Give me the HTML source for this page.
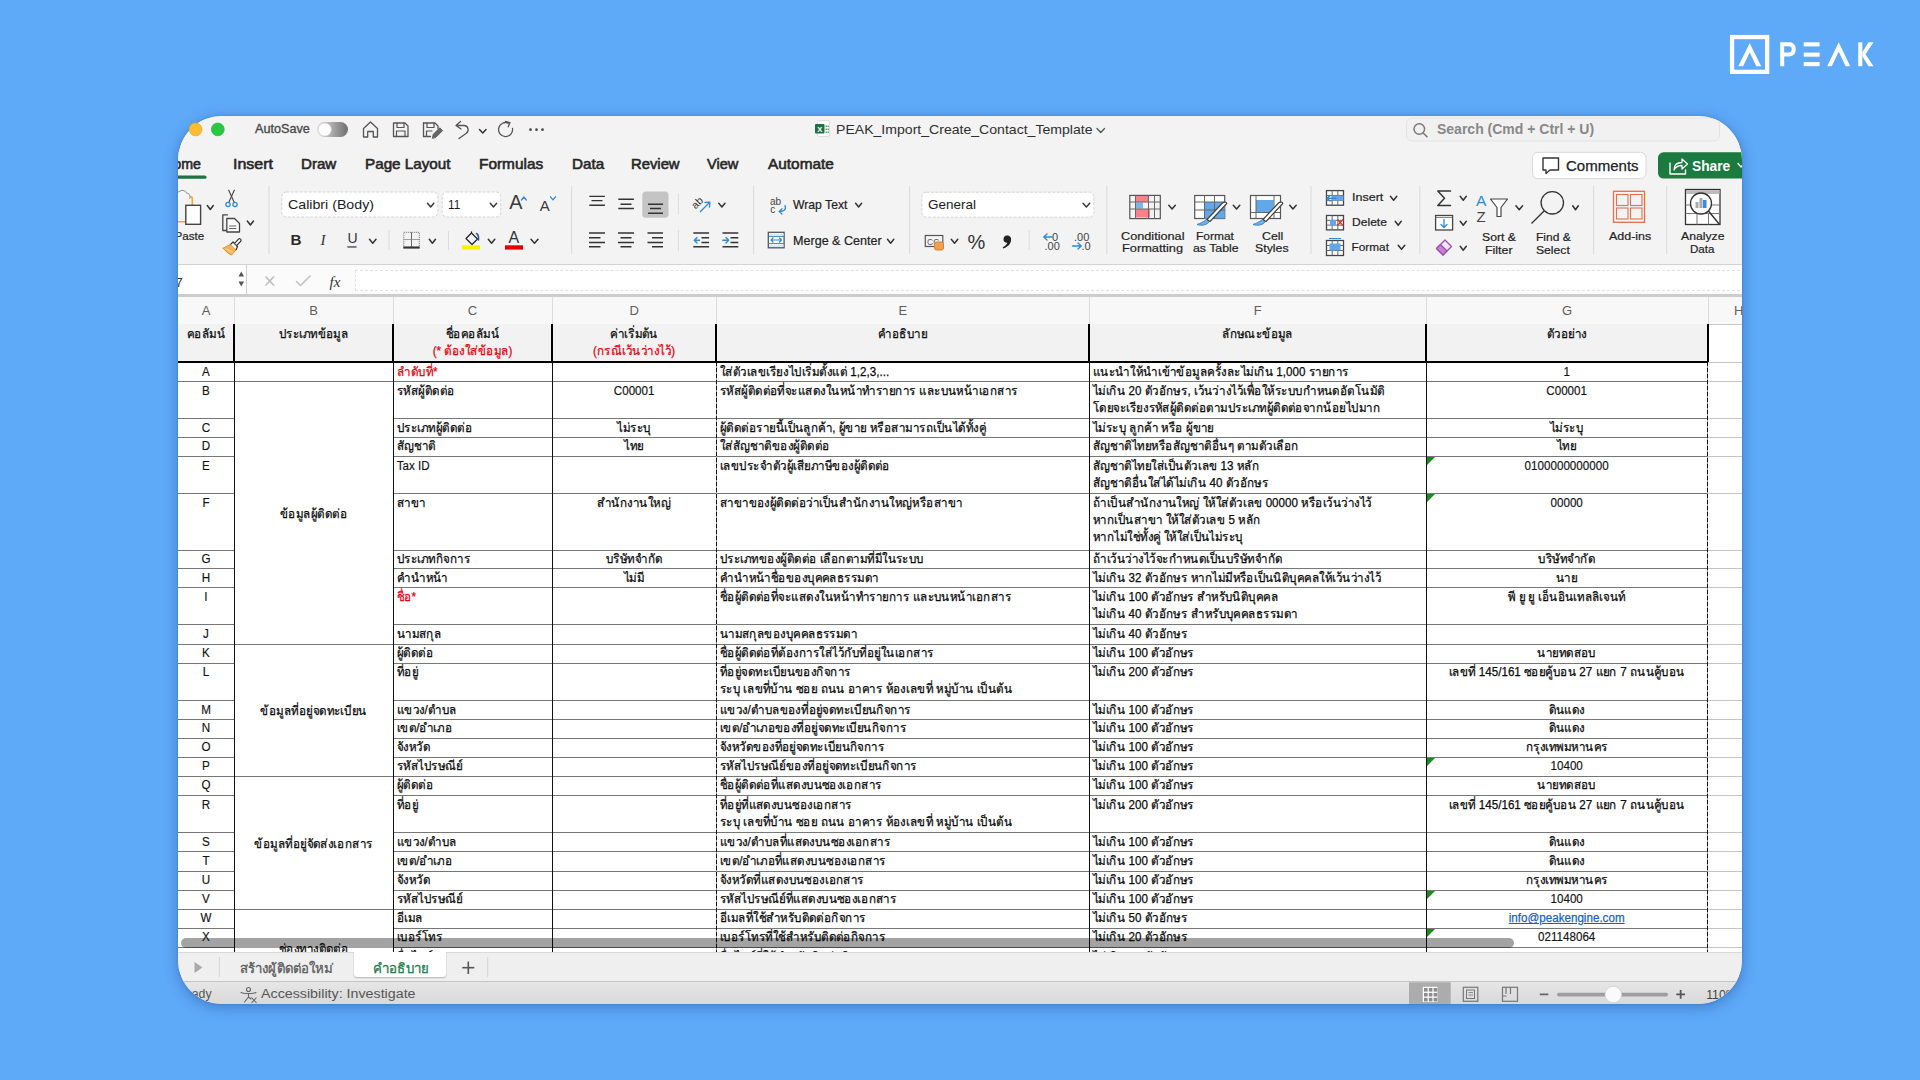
<!DOCTYPE html><html><head><meta charset="utf-8"><style>
*{margin:0;padding:0;box-sizing:border-box}
html,body{width:1920px;height:1080px;overflow:hidden}
body{background:#5ea9f8;font-family:"Liberation Sans", sans-serif;position:relative}
.abs{position:absolute}
#win{position:absolute;left:178px;top:116px;width:1564px;height:888px;border-radius:44px;overflow:hidden;background:#f3f3f3;box-shadow:0 3px 14px rgba(15,55,120,.38),0 0 2px rgba(15,55,120,.25)}
#inner{position:absolute;left:-178px;top:-116px;width:1920px;height:1080px}
.colh{text-align:center;font-size:13px;color:#5e5e5e;line-height:16px}
.cell{font-size:12.5px;line-height:17px;color:#0a0a0a;padding:1.2px 4px 0;white-space:nowrap;transform:scaleX(0.93);transform-origin:0 0;-webkit-text-stroke-width:0.25px}
.cell.lat{-webkit-text-stroke-width:0.15px;color:#111}
.cell.c{text-align:center;transform-origin:50% 0}
.red{color:#e8000b}
.lnk{color:#1b5fc6;text-decoration:underline}
.hl{height:1px;background:#777}
.hl2{height:1px;background:#c6c6c6}
.vl{background:#111}
.vd{background:repeating-linear-gradient(180deg,#111 0 4px,#999 4px 6px)}
.tri{width:0;height:0;border-top:8px solid #1a8a1a;border-right:8px solid transparent}
.t{white-space:nowrap}
</style></head><body>
<svg class="abs" style="left:0;top:0;z-index:5" width="1920" height="140" viewBox="0 0 1920 140">
<circle cx="195.6" cy="129.4" r="6.4" fill="#febc2e" stroke="#e6a62a" stroke-width="0.7"/>
<circle cx="217.8" cy="129.4" r="6.4" fill="#28c840" stroke="#22b43a" stroke-width="0.7"/>
<rect x="1732.05" y="37.05" width="35.1" height="34.8" fill="none" stroke="#fff" stroke-width="4.3"/>
<polygon points="1738.2,66.2 1749.7,43.2 1761.2,66.2 1756.3,66.2 1749.7,52.6 1743.1,66.2" fill="#fff"/>
<path d="M1780.2,66.2 L1780.2,42.3 L1789,42.3 C1793.5,42.3 1795.7,45 1795.7,49.3 C1795.7,53.6 1793.5,56.4 1789,56.4 L1784.2,56.4 L1784.2,66.2 Z M1784.2,46.2 L1784.2,52.5 L1788.7,52.5 C1790.8,52.5 1791.7,51.3 1791.7,49.35 C1791.7,47.4 1790.8,46.2 1788.7,46.2 Z" fill="#fff" fill-rule="evenodd"/>
<rect x="1803.7" y="42.3" width="15.9" height="4.1" fill="#fff"/>
<rect x="1803.7" y="52.6" width="15.9" height="4.1" fill="#fff"/>
<rect x="1803.7" y="62.1" width="15.9" height="4.1" fill="#fff"/>
<polygon points="1827.2,66.2 1838.7,42.3 1850.2,66.2 1845.6,66.2 1838.7,51.5 1831.8,66.2" fill="#fff"/>
<rect x="1858.2" y="42.3" width="4.1" height="23.9" fill="#fff"/>
<polygon points="1862.3,52.3 1868.5,42.3 1873.5,42.3 1865.5,54.3 1873.5,66.2 1868.5,66.2 1862.3,56.3" fill="#fff"/>
</svg>
<div id="win"><div id="inner">

<div class="abs" style="left:178px;top:116px;width:1564px;height:149px;background:#f3f3f3"></div>
<div class="abs" style="left:178px;top:264px;width:1564px;height:1px;background:#d2d2d2"></div>
<div class="abs" style="left:178px;top:265px;width:1564px;height:29.5px;background:#fbfbfb"></div>
<div class="abs" style="left:178px;top:265px;width:68px;height:29.5px;background:#fff"></div>
<div class="abs" style="left:246px;top:265px;width:1px;height:29.5px;background:#d0d0d0"></div>
<div class="abs" style="left:354.5px;top:270px;width:1400px;height:21px;background:#fff;border:1px dashed #e2e2e2;border-right:none"></div>
<div class="abs" style="left:178px;top:294px;width:1564px;height:2.5px;background:#cdcdcd"></div>
<div class="abs" style="left:178px;top:324px;width:1564px;height:628px;background:#fff"></div>

<div class="abs" style="left:0;top:0;width:1920px;height:952px;overflow:hidden"><div class="abs" style="left:178px;top:296.5px;width:1570px;height:27.7px;background:#f8f8f8"></div><div class="abs" style="left:178px;top:323.7px;width:1570px;height:1px;background:#c8c8c8"></div><div class="abs colh" style="left:178px;top:302.5px;width:56px">A</div><div class="abs colh" style="left:234px;top:302.5px;width:159px">B</div><div class="abs" style="left:234px;top:296.5px;width:1px;height:27.7px;background:#dcdcdc"></div><div class="abs colh" style="left:393px;top:302.5px;width:159px">C</div><div class="abs" style="left:393px;top:296.5px;width:1px;height:27.7px;background:#dcdcdc"></div><div class="abs colh" style="left:552px;top:302.5px;width:164.3px">D</div><div class="abs" style="left:552px;top:296.5px;width:1px;height:27.7px;background:#dcdcdc"></div><div class="abs colh" style="left:716.3px;top:302.5px;width:373px">E</div><div class="abs" style="left:716.3px;top:296.5px;width:1px;height:27.7px;background:#dcdcdc"></div><div class="abs colh" style="left:1089.3px;top:302.5px;width:337px">F</div><div class="abs" style="left:1089.3px;top:296.5px;width:1px;height:27.7px;background:#dcdcdc"></div><div class="abs colh" style="left:1426.3px;top:302.5px;width:281.3px">G</div><div class="abs" style="left:1426.3px;top:296.5px;width:1px;height:27.7px;background:#dcdcdc"></div><div class="abs colh" style="left:1707.6px;top:302.5px;width:62.4px">H</div><div class="abs" style="left:1707.6px;top:296.5px;width:1px;height:27.7px;background:#dcdcdc"></div><div class="abs" style="left:178px;top:324.2px;width:1529.6px;height:36.8px;background:#f2f2f2"></div><div class="abs cell c" style="left:178px;top:325.2px;width:56px">คอลัมน์</div><div class="abs cell c" style="left:234px;top:325.2px;width:159px">ประเภทข้อมูล</div><div class="abs cell c" style="left:393px;top:325.2px;width:159px">ชื่อคอลัมน์<br><span class="red">(* ต้องใส่ข้อมูล)</span></div><div class="abs cell c" style="left:552px;top:325.2px;width:164.3px">ค่าเริ่มต้น<br><span class="red">(กรณีเว้นว่างไว้)</span></div><div class="abs cell c" style="left:716.3px;top:325.2px;width:373px">คำอธิบาย</div><div class="abs cell c" style="left:1089.3px;top:325.2px;width:337px">ลักษณะข้อมูล</div><div class="abs cell c" style="left:1426.3px;top:325.2px;width:281.3px">ตัวอย่าง</div><div class="abs cell c lat" style="left:178px;top:362.7px;width:56px">A</div><div class="abs cell" style="left:393px;top:362.7px;width:159px"><span class="red">ลำดับที่*</span></div><div class="abs cell" style="left:716.3px;top:362.7px;width:373px">ใส่ตัวเลขเรียงไปเริ่มตั้งแต่ 1,2,3,...</div><div class="abs cell" style="left:1089.3px;top:362.7px;width:337px">แนะนำให้นำเข้าข้อมูลครั้งละไม่เกิน 1,000 รายการ</div><div class="abs cell c lat" style="left:1426.3px;top:362.7px;width:281.3px">1</div><div class="abs cell c lat" style="left:178px;top:381.7px;width:56px">B</div><div class="abs cell" style="left:393px;top:381.7px;width:159px">รหัสผู้ติดต่อ</div><div class="abs cell c lat" style="left:552px;top:381.7px;width:164.3px">C00001</div><div class="abs cell" style="left:716.3px;top:381.7px;width:373px">รหัสผู้ติดต่อที่จะแสดงในหน้าทำรายการ และบนหน้าเอกสาร</div><div class="abs cell" style="left:1089.3px;top:381.7px;width:337px">ไม่เกิน 20 ตัวอักษร, เว้นว่างไว้เพื่อให้ระบบกำหนดอัตโนมัติ<br>โดยจะเรียงรหัสผู้ติดต่อตามประเภทผู้ติดต่อจากน้อยไปมาก</div><div class="abs cell c lat" style="left:1426.3px;top:381.7px;width:281.3px">C00001</div><div class="abs cell c lat" style="left:178px;top:418.7px;width:56px">C</div><div class="abs cell" style="left:393px;top:418.7px;width:159px">ประเภทผู้ติดต่อ</div><div class="abs cell c" style="left:552px;top:418.7px;width:164.3px">ไม่ระบุ</div><div class="abs cell" style="left:716.3px;top:418.7px;width:373px">ผู้ติดต่อรายนี้เป็นลูกค้า, ผู้ขาย หรือสามารถเป็นได้ทั้งคู่</div><div class="abs cell" style="left:1089.3px;top:418.7px;width:337px">ไม่ระบุ ลูกค้า หรือ ผู้ขาย</div><div class="abs cell c" style="left:1426.3px;top:418.7px;width:281.3px">ไม่ระบุ</div><div class="abs cell c lat" style="left:178px;top:437.2px;width:56px">D</div><div class="abs cell" style="left:393px;top:437.2px;width:159px">สัญชาติ</div><div class="abs cell c" style="left:552px;top:437.2px;width:164.3px">ไทย</div><div class="abs cell" style="left:716.3px;top:437.2px;width:373px">ใส่สัญชาติของผู้ติดต่อ</div><div class="abs cell" style="left:1089.3px;top:437.2px;width:337px">สัญชาติไทยหรือสัญชาติอื่นๆ ตามตัวเลือก</div><div class="abs cell c" style="left:1426.3px;top:437.2px;width:281.3px">ไทย</div><div class="abs cell c lat" style="left:178px;top:456.5px;width:56px">E</div><div class="abs cell lat" style="left:393px;top:456.5px;width:159px">Tax ID</div><div class="abs cell" style="left:716.3px;top:456.5px;width:373px">เลขประจำตัวผู้เสียภาษีของผู้ติดต่อ</div><div class="abs cell" style="left:1089.3px;top:456.5px;width:337px">สัญชาติไทยใส่เป็นตัวเลข 13 หลัก<br>สัญชาติอื่นใส่ได้ไม่เกิน 40 ตัวอักษร</div><div class="abs cell c lat" style="left:1426.3px;top:456.5px;width:281.3px">0100000000000</div><div class="abs cell c lat" style="left:178px;top:493.4px;width:56px">F</div><div class="abs cell" style="left:393px;top:493.4px;width:159px">สาขา</div><div class="abs cell c" style="left:552px;top:493.4px;width:164.3px">สำนักงานใหญ่</div><div class="abs cell" style="left:716.3px;top:493.4px;width:373px">สาขาของผู้ติดต่อว่าเป็นสำนักงานใหญ่หรือสาขา</div><div class="abs cell" style="left:1089.3px;top:493.4px;width:337px">ถ้าเป็นสำนักงานใหญ่ ให้ใส่ตัวเลข 00000 หรือเว้นว่างไว้<br>หากเป็นสาขา ให้ใส่ตัวเลข 5 หลัก<br>หากไม่ใช่ทั้งคู่ ให้ใส่เป็นไม่ระบุ</div><div class="abs cell c lat" style="left:1426.3px;top:493.4px;width:281.3px">00000</div><div class="abs cell c lat" style="left:178px;top:550px;width:56px">G</div><div class="abs cell" style="left:393px;top:550px;width:159px">ประเภทกิจการ</div><div class="abs cell c" style="left:552px;top:550px;width:164.3px">บริษัทจำกัด</div><div class="abs cell" style="left:716.3px;top:550px;width:373px">ประเภทของผู้ติดต่อ เลือกตามที่มีในระบบ</div><div class="abs cell" style="left:1089.3px;top:550px;width:337px">ถ้าเว้นว่างไว้จะกำหนดเป็นบริษัทจำกัด</div><div class="abs cell c" style="left:1426.3px;top:550px;width:281.3px">บริษัทจำกัด</div><div class="abs cell c lat" style="left:178px;top:568.8px;width:56px">H</div><div class="abs cell" style="left:393px;top:568.8px;width:159px">คำนำหน้า</div><div class="abs cell c" style="left:552px;top:568.8px;width:164.3px">ไม่มี</div><div class="abs cell" style="left:716.3px;top:568.8px;width:373px">คำนำหน้าชื่อของบุคคลธรรมดา</div><div class="abs cell" style="left:1089.3px;top:568.8px;width:337px">ไม่เกิน 32 ตัวอักษร หากไม่มีหรือเป็นนิติบุคคลให้เว้นว่างไว้</div><div class="abs cell c" style="left:1426.3px;top:568.8px;width:281.3px">นาย</div><div class="abs cell c lat" style="left:178px;top:587.8px;width:56px">I</div><div class="abs cell" style="left:393px;top:587.8px;width:159px"><span class="red">ชื่อ*</span></div><div class="abs cell" style="left:716.3px;top:587.8px;width:373px">ชื่อผู้ติดต่อที่จะแสดงในหน้าทำรายการ และบนหน้าเอกสาร</div><div class="abs cell" style="left:1089.3px;top:587.8px;width:337px">ไม่เกิน 100 ตัวอักษร สำหรับนิติบุคคล<br>ไม่เกิน 40 ตัวอักษร สำหรับบุคคลธรรมดา</div><div class="abs cell c" style="left:1426.3px;top:587.8px;width:281.3px">พี ยู ยู เอ็นอินเทลลิเจนท์</div><div class="abs cell c lat" style="left:178px;top:624.8px;width:56px">J</div><div class="abs cell" style="left:393px;top:624.8px;width:159px">นามสกุล</div><div class="abs cell" style="left:716.3px;top:624.8px;width:373px">นามสกุลของบุคคลธรรมดา</div><div class="abs cell" style="left:1089.3px;top:624.8px;width:337px">ไม่เกิน 40 ตัวอักษร</div><div class="abs cell c lat" style="left:178px;top:644.1px;width:56px">K</div><div class="abs cell" style="left:393px;top:644.1px;width:159px">ผู้ติดต่อ</div><div class="abs cell" style="left:716.3px;top:644.1px;width:373px">ชื่อผู้ติดต่อที่ต้องการใส่ไว้กับที่อยู่ในเอกสาร</div><div class="abs cell" style="left:1089.3px;top:644.1px;width:337px">ไม่เกิน 100 ตัวอักษร</div><div class="abs cell c" style="left:1426.3px;top:644.1px;width:281.3px">นายทดสอบ</div><div class="abs cell c lat" style="left:178px;top:663.3px;width:56px">L</div><div class="abs cell" style="left:393px;top:663.3px;width:159px">ที่อยู่</div><div class="abs cell" style="left:716.3px;top:663.3px;width:373px">ที่อยู่จดทะเบียนของกิจการ<br>ระบุ เลขที่บ้าน ซอย ถนน อาคาร ห้องเลขที่ หมู่บ้าน เป็นต้น</div><div class="abs cell" style="left:1089.3px;top:663.3px;width:337px">ไม่เกิน 200 ตัวอักษร</div><div class="abs cell c" style="left:1426.3px;top:663.3px;width:281.3px">เลขที่ 145/161 ซอยคู้บอน 27 แยก 7 ถนนคู้บอน</div><div class="abs cell c lat" style="left:178px;top:700.4px;width:56px">M</div><div class="abs cell" style="left:393px;top:700.4px;width:159px">แขวง/ตำบล</div><div class="abs cell" style="left:716.3px;top:700.4px;width:373px">แขวง/ตำบลของที่อยู่จดทะเบียนกิจการ</div><div class="abs cell" style="left:1089.3px;top:700.4px;width:337px">ไม่เกิน 100 ตัวอักษร</div><div class="abs cell c" style="left:1426.3px;top:700.4px;width:281.3px">ดินแดง</div><div class="abs cell c lat" style="left:178px;top:719.3px;width:56px">N</div><div class="abs cell" style="left:393px;top:719.3px;width:159px">เขต/อำเภอ</div><div class="abs cell" style="left:716.3px;top:719.3px;width:373px">เขต/อำเภอของที่อยู่จดทะเบียนกิจการ</div><div class="abs cell" style="left:1089.3px;top:719.3px;width:337px">ไม่เกิน 100 ตัวอักษร</div><div class="abs cell c" style="left:1426.3px;top:719.3px;width:281.3px">ดินแดง</div><div class="abs cell c lat" style="left:178px;top:738.2px;width:56px">O</div><div class="abs cell" style="left:393px;top:738.2px;width:159px">จังหวัด</div><div class="abs cell" style="left:716.3px;top:738.2px;width:373px">จังหวัดของที่อยู่จดทะเบียนกิจการ</div><div class="abs cell" style="left:1089.3px;top:738.2px;width:337px">ไม่เกิน 100 ตัวอักษร</div><div class="abs cell c" style="left:1426.3px;top:738.2px;width:281.3px">กรุงเทพมหานคร</div><div class="abs cell c lat" style="left:178px;top:757.3px;width:56px">P</div><div class="abs cell" style="left:393px;top:757.3px;width:159px">รหัสไปรษณีย์</div><div class="abs cell" style="left:716.3px;top:757.3px;width:373px">รหัสไปรษณีย์ของที่อยู่จดทะเบียนกิจการ</div><div class="abs cell" style="left:1089.3px;top:757.3px;width:337px">ไม่เกิน 100 ตัวอักษร</div><div class="abs cell c lat" style="left:1426.3px;top:757.3px;width:281.3px">10400</div><div class="abs cell c lat" style="left:178px;top:776.3px;width:56px">Q</div><div class="abs cell" style="left:393px;top:776.3px;width:159px">ผู้ติดต่อ</div><div class="abs cell" style="left:716.3px;top:776.3px;width:373px">ชื่อผู้ติดต่อที่แสดงบนซองเอกสาร</div><div class="abs cell" style="left:1089.3px;top:776.3px;width:337px">ไม่เกิน 100 ตัวอักษร</div><div class="abs cell c" style="left:1426.3px;top:776.3px;width:281.3px">นายทดสอบ</div><div class="abs cell c lat" style="left:178px;top:795.4px;width:56px">R</div><div class="abs cell" style="left:393px;top:795.4px;width:159px">ที่อยู่</div><div class="abs cell" style="left:716.3px;top:795.4px;width:373px">ที่อยู่ที่แสดงบนซองเอกสาร<br>ระบุ เลขที่บ้าน ซอย ถนน อาคาร ห้องเลขที่ หมู่บ้าน เป็นต้น</div><div class="abs cell" style="left:1089.3px;top:795.4px;width:337px">ไม่เกิน 200 ตัวอักษร</div><div class="abs cell c" style="left:1426.3px;top:795.4px;width:281.3px">เลขที่ 145/161 ซอยคู้บอน 27 แยก 7 ถนนคู้บอน</div><div class="abs cell c lat" style="left:178px;top:832.5px;width:56px">S</div><div class="abs cell" style="left:393px;top:832.5px;width:159px">แขวง/ตำบล</div><div class="abs cell" style="left:716.3px;top:832.5px;width:373px">แขวง/ตำบลที่แสดงบนซองเอกสาร</div><div class="abs cell" style="left:1089.3px;top:832.5px;width:337px">ไม่เกิน 100 ตัวอักษร</div><div class="abs cell c" style="left:1426.3px;top:832.5px;width:281.3px">ดินแดง</div><div class="abs cell c lat" style="left:178px;top:851.9px;width:56px">T</div><div class="abs cell" style="left:393px;top:851.9px;width:159px">เขต/อำเภอ</div><div class="abs cell" style="left:716.3px;top:851.9px;width:373px">เขต/อำเภอที่แสดงบนซองเอกสาร</div><div class="abs cell" style="left:1089.3px;top:851.9px;width:337px">ไม่เกิน 100 ตัวอักษร</div><div class="abs cell c" style="left:1426.3px;top:851.9px;width:281.3px">ดินแดง</div><div class="abs cell c lat" style="left:178px;top:871.1px;width:56px">U</div><div class="abs cell" style="left:393px;top:871.1px;width:159px">จังหวัด</div><div class="abs cell" style="left:716.3px;top:871.1px;width:373px">จังหวัดที่แสดงบนซองเอกสาร</div><div class="abs cell" style="left:1089.3px;top:871.1px;width:337px">ไม่เกิน 100 ตัวอักษร</div><div class="abs cell c" style="left:1426.3px;top:871.1px;width:281.3px">กรุงเทพมหานคร</div><div class="abs cell c lat" style="left:178px;top:890px;width:56px">V</div><div class="abs cell" style="left:393px;top:890px;width:159px">รหัสไปรษณีย์</div><div class="abs cell" style="left:716.3px;top:890px;width:373px">รหัสไปรษณีย์ที่แสดงบนซองเอกสาร</div><div class="abs cell" style="left:1089.3px;top:890px;width:337px">ไม่เกิน 100 ตัวอักษร</div><div class="abs cell c lat" style="left:1426.3px;top:890px;width:281.3px">10400</div><div class="abs cell c lat" style="left:178px;top:909.2px;width:56px">W</div><div class="abs cell" style="left:393px;top:909.2px;width:159px">อีเมล</div><div class="abs cell" style="left:716.3px;top:909.2px;width:373px">อีเมลที่ใช้สำหรับติดต่อกิจการ</div><div class="abs cell" style="left:1089.3px;top:909.2px;width:337px">ไม่เกิน 50 ตัวอักษร</div><div class="abs cell c" style="left:1426.3px;top:909.2px;width:281.3px"><span class="lnk">info@peakengine.com</span></div><div class="abs cell c lat" style="left:178px;top:928.3px;width:56px">X</div><div class="abs cell" style="left:393px;top:928.3px;width:159px">เบอร์โทร</div><div class="abs cell" style="left:716.3px;top:928.3px;width:373px">เบอร์โทรที่ใช้สำหรับติดต่อกิจการ</div><div class="abs cell" style="left:1089.3px;top:928.3px;width:337px">ไม่เกิน 20 ตัวอักษร</div><div class="abs cell c lat" style="left:1426.3px;top:928.3px;width:281.3px">021148064</div><div class="abs cell c lat" style="left:178px;top:947.5px;width:56px">Y</div><div class="abs cell" style="left:393px;top:947.5px;width:159px">ชื่อไลน์</div><div class="abs cell" style="left:716.3px;top:947.5px;width:373px">ชื่อไลน์ที่ใช้สำหรับติดต่อกิจการ</div><div class="abs cell" style="left:1089.3px;top:947.5px;width:337px">ไม่เกิน 50 ตัวอักษร</div><div class="abs cell c lat" style="left:1426.3px;top:947.5px;width:281.3px">@peak</div><div class="abs cell c lat" style="left:178px;top:966.6px;width:56px">Z</div><div class="abs cell" style="left:393px;top:966.6px;width:159px">เว็บไซต์</div><div class="abs cell" style="left:716.3px;top:966.6px;width:373px">เว็บไซต์ของกิจการ</div><div class="abs cell" style="left:1089.3px;top:966.6px;width:337px">ไม่เกิน 100 ตัวอักษร</div><div class="abs cell c lat" style="left:1426.3px;top:966.6px;width:281.3px">www.peakaccount.com</div><div class="abs cell c" style="left:234px;top:504.9px;width:159px;line-height:17px">ข้อมูลผู้ติดต่อ</div><div class="abs cell c" style="left:234px;top:702.2px;width:159px;line-height:17px">ข้อมูลที่อยู่จดทะเบียน</div><div class="abs cell c" style="left:234px;top:834.75px;width:159px;line-height:17px">ข้อมูลที่อยู่จัดส่งเอกสาร</div><div class="abs cell c" style="left:234px;top:939.45px;width:159px;line-height:17px">ช่องทางติดต่อ</div><div class="abs hl" style="left:178px;top:381.2px;width:1529.6px"></div><div class="abs hl2" style="left:1708px;top:381.2px;width:40px"></div><div class="abs hl" style="left:178px;top:418.2px;width:56px"></div><div class="abs hl" style="left:393px;top:418.2px;width:1314.6px"></div><div class="abs hl2" style="left:1708px;top:418.2px;width:40px"></div><div class="abs hl" style="left:178px;top:436.7px;width:56px"></div><div class="abs hl" style="left:393px;top:436.7px;width:1314.6px"></div><div class="abs hl2" style="left:1708px;top:436.7px;width:40px"></div><div class="abs hl" style="left:178px;top:456px;width:56px"></div><div class="abs hl" style="left:393px;top:456px;width:1314.6px"></div><div class="abs hl2" style="left:1708px;top:456px;width:40px"></div><div class="abs hl" style="left:178px;top:492.9px;width:56px"></div><div class="abs hl" style="left:393px;top:492.9px;width:1314.6px"></div><div class="abs hl2" style="left:1708px;top:492.9px;width:40px"></div><div class="abs hl" style="left:178px;top:549.5px;width:56px"></div><div class="abs hl" style="left:393px;top:549.5px;width:1314.6px"></div><div class="abs hl2" style="left:1708px;top:549.5px;width:40px"></div><div class="abs hl" style="left:178px;top:568.3px;width:56px"></div><div class="abs hl" style="left:393px;top:568.3px;width:1314.6px"></div><div class="abs hl2" style="left:1708px;top:568.3px;width:40px"></div><div class="abs hl" style="left:178px;top:587.3px;width:56px"></div><div class="abs hl" style="left:393px;top:587.3px;width:1314.6px"></div><div class="abs hl2" style="left:1708px;top:587.3px;width:40px"></div><div class="abs hl" style="left:178px;top:624.3px;width:56px"></div><div class="abs hl" style="left:393px;top:624.3px;width:1314.6px"></div><div class="abs hl2" style="left:1708px;top:624.3px;width:40px"></div><div class="abs hl" style="left:178px;top:643.6px;width:1529.6px"></div><div class="abs hl2" style="left:1708px;top:643.6px;width:40px"></div><div class="abs hl" style="left:178px;top:662.8px;width:56px"></div><div class="abs hl" style="left:393px;top:662.8px;width:1314.6px"></div><div class="abs hl2" style="left:1708px;top:662.8px;width:40px"></div><div class="abs hl" style="left:178px;top:699.9px;width:56px"></div><div class="abs hl" style="left:393px;top:699.9px;width:1314.6px"></div><div class="abs hl2" style="left:1708px;top:699.9px;width:40px"></div><div class="abs hl" style="left:178px;top:718.8px;width:56px"></div><div class="abs hl" style="left:393px;top:718.8px;width:1314.6px"></div><div class="abs hl2" style="left:1708px;top:718.8px;width:40px"></div><div class="abs hl" style="left:178px;top:737.7px;width:56px"></div><div class="abs hl" style="left:393px;top:737.7px;width:1314.6px"></div><div class="abs hl2" style="left:1708px;top:737.7px;width:40px"></div><div class="abs hl" style="left:178px;top:756.8px;width:56px"></div><div class="abs hl" style="left:393px;top:756.8px;width:1314.6px"></div><div class="abs hl2" style="left:1708px;top:756.8px;width:40px"></div><div class="abs hl" style="left:178px;top:775.8px;width:1529.6px"></div><div class="abs hl2" style="left:1708px;top:775.8px;width:40px"></div><div class="abs hl" style="left:178px;top:794.9px;width:56px"></div><div class="abs hl" style="left:393px;top:794.9px;width:1314.6px"></div><div class="abs hl2" style="left:1708px;top:794.9px;width:40px"></div><div class="abs hl" style="left:178px;top:832px;width:56px"></div><div class="abs hl" style="left:393px;top:832px;width:1314.6px"></div><div class="abs hl2" style="left:1708px;top:832px;width:40px"></div><div class="abs hl" style="left:178px;top:851.4px;width:56px"></div><div class="abs hl" style="left:393px;top:851.4px;width:1314.6px"></div><div class="abs hl2" style="left:1708px;top:851.4px;width:40px"></div><div class="abs hl" style="left:178px;top:870.6px;width:56px"></div><div class="abs hl" style="left:393px;top:870.6px;width:1314.6px"></div><div class="abs hl2" style="left:1708px;top:870.6px;width:40px"></div><div class="abs hl" style="left:178px;top:889.5px;width:56px"></div><div class="abs hl" style="left:393px;top:889.5px;width:1314.6px"></div><div class="abs hl2" style="left:1708px;top:889.5px;width:40px"></div><div class="abs hl" style="left:178px;top:908.7px;width:1529.6px"></div><div class="abs hl2" style="left:1708px;top:908.7px;width:40px"></div><div class="abs hl" style="left:178px;top:927.8px;width:56px"></div><div class="abs hl" style="left:393px;top:927.8px;width:1314.6px"></div><div class="abs hl2" style="left:1708px;top:927.8px;width:40px"></div><div class="abs hl" style="left:178px;top:947px;width:56px"></div><div class="abs hl" style="left:393px;top:947px;width:1314.6px"></div><div class="abs hl2" style="left:1708px;top:947px;width:40px"></div><div class="abs hl" style="left:178px;top:966.1px;width:56px"></div><div class="abs hl" style="left:393px;top:966.1px;width:1314.6px"></div><div class="abs hl2" style="left:1708px;top:966.1px;width:40px"></div><div class="abs" style="left:178px;top:361px;width:1530.6px;height:2px;background:#000"></div><div class="abs hl2" style="left:1708px;top:361.7px;width:40px"></div><div class="abs" style="left:233px;top:324px;width:2px;height:38px;background:#000"></div><div class="abs vl" style="left:233.5px;top:362px;width:1px;height:590px"></div><div class="abs" style="left:392px;top:324px;width:2px;height:38px;background:#000"></div><div class="abs vl" style="left:392.5px;top:362px;width:1px;height:590px"></div><div class="abs" style="left:551px;top:324px;width:2px;height:38px;background:#000"></div><div class="abs vl" style="left:551.5px;top:362px;width:1px;height:590px"></div><div class="abs" style="left:715.3px;top:324px;width:2px;height:38px;background:#000"></div><div class="abs vd" style="left:715.8px;top:362px;width:1px;height:590px"></div><div class="abs" style="left:1088.3px;top:324px;width:2px;height:38px;background:#000"></div><div class="abs vl" style="left:1088.8px;top:362px;width:1px;height:590px"></div><div class="abs" style="left:1425.3px;top:324px;width:2px;height:38px;background:#000"></div><div class="abs vl" style="left:1425.8px;top:362px;width:1px;height:590px"></div><div class="abs" style="left:1706.6px;top:324px;width:2px;height:38px;background:#000"></div><div class="abs vd" style="left:1707.1px;top:362px;width:1px;height:590px"></div><div class="abs tri" style="left:1427px;top:457px"></div><div class="abs tri" style="left:1427px;top:493.9px"></div><div class="abs tri" style="left:1427px;top:757.8px"></div><div class="abs tri" style="left:1427px;top:890.5px"></div><div class="abs tri" style="left:1427px;top:928.8px"></div></div>

<div class="abs" style="left:181px;top:937.8px;width:1332.5px;height:10.2px;border-radius:5.1px;background:rgba(0,0,0,.36)"></div>
<div class="abs" style="left:178px;top:951.5px;width:1564px;height:30px;background:#efefef;border-top:1px solid #d9d9d9"></div>
<div class="abs" style="left:354.3px;top:951.5px;width:91.4px;height:25.7px;background:#fff;border-radius:0 0 3px 3px;box-shadow:0 1px 1.5px rgba(0,0,0,.25)"></div>
<div class="abs" style="left:178px;top:981px;width:1564px;height:23px;background:linear-gradient(#e6e6e6,#d9d9d9);border-top:1.5px solid #c4c4c4"></div>

<svg class="abs" style="left:0;top:0" width="1920" height="1080" viewBox="0 0 1920 1080"><defs><linearGradient id="tg" x1="0" x2="1"><stop offset="0" stop-color="#e2e2e2"/><stop offset="1" stop-color="#6f6f6f"/></linearGradient></defs><rect x="317.00" y="122.00" width="31.00" height="15.00" rx="7.50" fill="url(#tg)" stroke="none" stroke-width="0.00" /><circle cx="324.80" cy="129.50" r="6.60" fill="#ffffff" stroke="#c8c8c8" stroke-width="0.60"/><path d="M363.5,137 L363.5,128.5 L370.5,122 L377.5,128.5 L377.5,137 L373.3,137 L373.3,131.5 L367.7,131.5 L367.7,137 Z" fill="none" stroke="#555" stroke-width="1.30" stroke-linejoin="round" stroke-linecap="round" /><path d="M393.5,123 L405,123 L408,126 L408,136.5 L393.5,136.5 Z" fill="none" stroke="#555" stroke-width="1.30" stroke-linejoin="round" stroke-linecap="round" /><path d="M397,123 L397,127.5 L404,127.5 L404,123" fill="none" stroke="#555" stroke-width="1.20" stroke-linejoin="round" stroke-linecap="round" /><path d="M396.5,136.5 L396.5,131 L405,131 L405,136.5" fill="none" stroke="#555" stroke-width="1.20" stroke-linejoin="round" stroke-linecap="round" /><path d="M423.5,123 L435,123 L438,126 L438,128.5 M430.5,136.5 L423.5,136.5 Z" fill="none" stroke="#555" stroke-width="1.30" stroke-linejoin="round" stroke-linecap="round" /><path d="M423.5,123 L423.5,136.5" fill="none" stroke="#555" stroke-width="1.30" stroke-linejoin="round" stroke-linecap="round" /><path d="M427,123 L427,127.5 L434,127.5 L434,123" fill="none" stroke="#555" stroke-width="1.20" stroke-linejoin="round" stroke-linecap="round" /><path d="M426.5,136.5 L426.5,131 L432,131" fill="none" stroke="#555" stroke-width="1.20" stroke-linejoin="round" stroke-linecap="round" /><path d="M432.5,138 L433.3,134.3 L439.8,127.8 L442.6,130.6 L436.1,137.1 Z" fill="#666" stroke="#555" stroke-width="0.90" stroke-linejoin="round" stroke-linecap="round" /><path d="M456,125.5 L460.5,121.5 M456,125.5 L461,129 M456.5,125.5 L464,125.5 C468.5,125.5 469.5,131 466,133.5 L459,138.5" fill="none" stroke="#555" stroke-width="1.30" stroke-linejoin="round" stroke-linecap="round" /><polyline points="479.50,129.50 482.75,133.00 486.00,129.50" fill="none" stroke="#333" stroke-width="1.50" stroke-linecap="round" stroke-linejoin="round"/><path d="M512.5,128.5 A7,7 0 1 1 508.5,123.2" fill="none" stroke="#555" stroke-width="1.30" stroke-linejoin="round" stroke-linecap="round" /><path d="M505.5,121.5 L510,122.6 L508.2,126.8" fill="none" stroke="#555" stroke-width="1.30" stroke-linejoin="round" stroke-linecap="round" /><circle cx="530.50" cy="129.70" r="1.35" fill="#444" stroke="none" stroke-width="1.00"/><circle cx="536.50" cy="129.70" r="1.35" fill="#444" stroke="none" stroke-width="1.00"/><circle cx="542.50" cy="129.70" r="1.35" fill="#444" stroke="none" stroke-width="1.00"/><rect x="817.5" y="120.5" width="12" height="16" rx="1.5" fill="#fff" stroke="#d5d5d5" stroke-width="0.8"/><rect x="815.00" y="124.00" width="9.50" height="9.50" rx="1.00" fill="#1d7044" stroke="none" stroke-width="0.00" /><text x="819.7" y="131.8" font-size="7.5" font-family="Liberation Sans" font-weight="bold" fill="#fff" text-anchor="middle">X</text><rect x="825.50" y="125.50" width="1.30" height="1.60" rx="0.00" fill="#3d9a5c" stroke="none" stroke-width="1.00" /><rect x="827.50" y="125.50" width="1.30" height="1.60" rx="0.00" fill="#3d9a5c" stroke="none" stroke-width="1.00" /><rect x="825.50" y="128.50" width="1.30" height="1.60" rx="0.00" fill="#3d9a5c" stroke="none" stroke-width="1.00" /><rect x="827.50" y="128.50" width="1.30" height="1.60" rx="0.00" fill="#3d9a5c" stroke="none" stroke-width="1.00" /><rect x="825.50" y="131.50" width="1.30" height="1.60" rx="0.00" fill="#3d9a5c" stroke="none" stroke-width="1.00" /><rect x="827.50" y="131.50" width="1.30" height="1.60" rx="0.00" fill="#3d9a5c" stroke="none" stroke-width="1.00" /><polyline points="1097.00,128.50 1100.75,132.50 1104.50,128.50" fill="none" stroke="#555" stroke-width="1.30" stroke-linecap="round" stroke-linejoin="round"/><rect x="1406.50" y="118.00" width="313.00" height="23.00" rx="6.00" fill="#f1f1f1" stroke="#e3e3e3" stroke-width="1.00" /><circle cx="1419.30" cy="129.00" r="5.30" fill="none" stroke="#7a7a7a" stroke-width="1.50"/><line x1="1423.20" y1="133.00" x2="1427.00" y2="136.80" stroke="#7a7a7a" stroke-width="1.60" stroke-linecap="round"/><rect x="150.00" y="175.60" width="56.50" height="3.20" rx="1.60" fill="#1d7145" stroke="none" stroke-width="0.00" /><rect x="1532.50" y="152.30" width="113.50" height="26.30" rx="5.50" fill="#fff" stroke="#d9d9d9" stroke-width="1.00" /><path d="M1543,158 L1558.5,158 L1558.5,170 L1550,170 L1546,173.5 L1546,170 L1543,170 Z" fill="none" stroke="#333" stroke-width="1.40" stroke-linejoin="round" stroke-linecap="round" /><rect x="1658.00" y="152.30" width="120.00" height="26.30" rx="5.50" fill="#1a7a3f" stroke="none" stroke-width="0.00" /><path d="M1670,163 L1670,174 L1685.5,174 L1685.5,170" fill="none" stroke="#fff" stroke-width="1.40" stroke-linejoin="round" stroke-linecap="round" /><path d="M1674,170 C1674,164.5 1677.5,162.5 1682,162.5 L1682,159 L1687.5,164 L1682,169 L1682,165.5 C1678,165.5 1675.5,167 1674,170 Z" fill="none" stroke="#fff" stroke-width="1.30" stroke-linejoin="round" stroke-linecap="round" /><polyline points="1738.00,163.50 1741.00,167.00 1744.00,163.50" fill="none" stroke="#fff" stroke-width="1.30" stroke-linecap="round" stroke-linejoin="round"/><rect x="268.50" y="186.00" width="1" height="68.00" fill="#dadada"/><rect x="571.10" y="186.00" width="1" height="68.00" fill="#dadada"/><rect x="753.10" y="186.00" width="1" height="68.00" fill="#dadada"/><rect x="909.10" y="186.00" width="1" height="68.00" fill="#dadada"/><rect x="1106.30" y="186.00" width="1" height="68.00" fill="#dadada"/><rect x="1310.50" y="186.00" width="1" height="68.00" fill="#dadada"/><rect x="1419.30" y="186.00" width="1" height="68.00" fill="#dadada"/><rect x="1593.10" y="186.00" width="1" height="68.00" fill="#dadada"/><rect x="1666.20" y="186.00" width="1" height="68.00" fill="#dadada"/><rect x="388.50" y="230.00" width="1" height="20.00" fill="#dcdcdc"/><rect x="448.00" y="231.00" width="1" height="19.00" fill="#dcdcdc"/><rect x="677.90" y="194.00" width="1" height="20.00" fill="#dcdcdc"/><rect x="677.90" y="230.00" width="1" height="21.00" fill="#dcdcdc"/><rect x="1028.70" y="230.00" width="1" height="20.00" fill="#dcdcdc"/><rect x="165.00" y="196.70" width="27.30" height="25.00" rx="1.50" fill="none" stroke="#f0a830" stroke-width="1.60" /><path d="M172,199 C171.5,194 175,191 179,192 C181,189.5 185.5,190 186.5,193.2 C189.5,193.2 190.8,195.8 189.8,198.5" fill="#f6f6f6" stroke="#8a8a8a" stroke-width="1.00" stroke-linejoin="round" stroke-linecap="round" /><rect x="185.80" y="205.30" width="14.80" height="19.00" rx="0.00" fill="#fff" stroke="#444" stroke-width="1.40" /><polyline points="207.30,205.50 210.30,209.50 213.30,205.50" fill="none" stroke="#333" stroke-width="1.50" stroke-linecap="round" stroke-linejoin="round"/><line x1="228.50" y1="189.80" x2="234.50" y2="203.00" stroke="#444" stroke-width="1.10" stroke-linecap="butt"/><line x1="234.50" y1="189.80" x2="228.50" y2="203.00" stroke="#444" stroke-width="1.10" stroke-linecap="butt"/><circle cx="228.00" cy="204.50" r="2.10" fill="none" stroke="#2f8bd8" stroke-width="1.30"/><circle cx="235.00" cy="204.50" r="2.10" fill="none" stroke="#2f8bd8" stroke-width="1.30"/><path d="M227.5,214.8 L222.8,214.8 L222.8,230.5 L226.5,230.5" fill="none" stroke="#444" stroke-width="1.30" stroke-linejoin="round" stroke-linecap="round" /><path d="M226.8,218.5 L234.5,218.5 L239.5,223.5 L239.5,232 L226.8,232 Z" fill="#fff" stroke="#444" stroke-width="1.30" stroke-linejoin="round" stroke-linecap="round" /><path d="M229.5,226 L236,226 M229.5,228.5 L236,228.5" fill="none" stroke="#555" stroke-width="0.90" stroke-linejoin="round" stroke-linecap="round" /><polyline points="247.30,221.00 250.40,225.00 253.50,221.00" fill="none" stroke="#333" stroke-width="1.50" stroke-linecap="round" stroke-linejoin="round"/><path d="M223.2,248.2 L230.8,244.2 L236.2,249.6 L231.6,255 C229,254 225.5,251.5 223.2,248.2 Z" fill="#f5b25a" stroke="#e8912f" stroke-width="1.00" stroke-linejoin="round" stroke-linecap="round" /><path d="M226.5,249 L232.5,252.2" fill="none" stroke="#fbe0b8" stroke-width="1.00" stroke-linejoin="round" stroke-linecap="round" /><path d="M230.8,244.2 L233,242 L237.5,246.5 L236.2,249.6" fill="#fff" stroke="#333" stroke-width="1.20" stroke-linejoin="round" stroke-linecap="round" /><path d="M234.8,243.2 L238.5,239.2 C239.3,238.4 240.6,238.6 241,239.6 C241.3,240.4 240.8,241.2 240.2,241.8 L236.5,245.5" fill="#fff" stroke="#333" stroke-width="1.20" stroke-linejoin="round" stroke-linecap="round" /><rect x="281.80" y="192.00" width="156.00" height="25.00" rx="4.50" fill="#fff" stroke="#d4d4d4" stroke-width="1.00" stroke-dasharray="3 1.5"/><polyline points="427.50,203.30 430.65,207.00 433.80,203.30" fill="none" stroke="#333" stroke-width="1.40" stroke-linecap="round" stroke-linejoin="round"/><rect x="442.20" y="192.00" width="58.50" height="25.00" rx="4.50" fill="#fff" stroke="#d4d4d4" stroke-width="1.00" stroke-dasharray="3 1.5"/><polyline points="490.30,203.30 493.45,207.00 496.60,203.30" fill="none" stroke="#333" stroke-width="1.40" stroke-linecap="round" stroke-linejoin="round"/><polyline points="521.50,200.00 523.90,197.00 526.30,200.00" fill="none" stroke="#2f8bd8" stroke-width="1.30" stroke-linecap="round" stroke-linejoin="round"/><polyline points="550.50,196.80 553.00,199.80 555.50,196.80" fill="none" stroke="#2f8bd8" stroke-width="1.30" stroke-linecap="round" stroke-linejoin="round"/><text x="320.5" y="245" font-size="15" font-family="Liberation Serif" font-style="italic" fill="#333">I</text><rect x="347.30" y="246.30" width="9.30" height="1.30" rx="0.00" fill="#444" stroke="none" stroke-width="1.00" /><polyline points="369.50,239.30 372.75,243.20 376.00,239.30" fill="none" stroke="#333" stroke-width="1.50" stroke-linecap="round" stroke-linejoin="round"/><rect x="403.80" y="232.30" width="15.50" height="14.50" rx="0.00" fill="none" stroke="#666" stroke-width="1.00" stroke-dasharray="1 1"/><line x1="411.50" y1="232.30" x2="411.50" y2="246.80" stroke="#666" stroke-width="1.00" stroke-linecap="butt"/><line x1="403.80" y1="239.50" x2="419.30" y2="239.50" stroke="#888" stroke-width="0.80" stroke-linecap="butt"/><rect x="403.30" y="246.60" width="16.40" height="2.00" rx="0.00" fill="#333" stroke="none" stroke-width="1.00" /><polyline points="429.30,239.30 432.40,243.20 435.50,239.30" fill="none" stroke="#333" stroke-width="1.50" stroke-linecap="round" stroke-linejoin="round"/><path d="M466,238.5 L471.5,233 L477.5,239 L472,244.5 Z" fill="none" stroke="#222" stroke-width="1.20" stroke-linejoin="round" stroke-linecap="round" /><path d="M471.5,233 L471.5,231.8" fill="none" stroke="#222" stroke-width="1.20" stroke-linejoin="round" stroke-linecap="round" /><path d="M476.5,233.5 C478.5,234.5 478.8,237 478.5,240" fill="none" stroke="#1f5fa8" stroke-width="1.60" stroke-linejoin="round" stroke-linecap="round" /><rect x="462.00" y="245.30" width="18.00" height="4.30" rx="0.00" fill="#f7f300" stroke="none" stroke-width="1.00" /><polyline points="488.30,239.30 491.55,243.20 494.80,239.30" fill="none" stroke="#333" stroke-width="1.50" stroke-linecap="round" stroke-linejoin="round"/><rect x="505.00" y="245.30" width="18.00" height="4.30" rx="0.00" fill="#e30000" stroke="none" stroke-width="1.00" /><polyline points="531.00,239.30 534.50,243.20 538.00,239.30" fill="none" stroke="#333" stroke-width="1.50" stroke-linecap="round" stroke-linejoin="round"/><line x1="589.30" y1="196.40" x2="604.90" y2="196.40" stroke="#333" stroke-width="1.40" stroke-linecap="butt"/><line x1="591.50" y1="200.60" x2="602.50" y2="200.60" stroke="#333" stroke-width="1.40" stroke-linecap="butt"/><line x1="589.30" y1="205.30" x2="604.90" y2="205.30" stroke="#333" stroke-width="1.40" stroke-linecap="butt"/><line x1="618.30" y1="199.30" x2="633.90" y2="199.30" stroke="#333" stroke-width="1.40" stroke-linecap="butt"/><line x1="620.50" y1="204.20" x2="631.50" y2="204.20" stroke="#333" stroke-width="1.40" stroke-linecap="butt"/><line x1="618.30" y1="208.50" x2="633.90" y2="208.50" stroke="#333" stroke-width="1.40" stroke-linecap="butt"/><rect x="642.30" y="191.40" width="26.20" height="26.30" rx="3.50" fill="#c4c4c4" stroke="none" stroke-width="0.00" /><line x1="648.00" y1="204.30" x2="663.00" y2="204.30" stroke="#333" stroke-width="1.40" stroke-linecap="butt"/><line x1="650.00" y1="208.50" x2="661.00" y2="208.50" stroke="#333" stroke-width="1.40" stroke-linecap="butt"/><line x1="648.00" y1="213.30" x2="663.00" y2="213.30" stroke="#333" stroke-width="1.40" stroke-linecap="butt"/><line x1="589.00" y1="233.00" x2="605.00" y2="233.00" stroke="#333" stroke-width="1.40" stroke-linecap="butt"/><line x1="589.00" y1="237.80" x2="600.50" y2="237.80" stroke="#333" stroke-width="1.40" stroke-linecap="butt"/><line x1="589.00" y1="242.50" x2="605.00" y2="242.50" stroke="#333" stroke-width="1.40" stroke-linecap="butt"/><line x1="589.00" y1="246.70" x2="600.50" y2="246.70" stroke="#333" stroke-width="1.40" stroke-linecap="butt"/><line x1="618.00" y1="233.00" x2="634.00" y2="233.00" stroke="#333" stroke-width="1.40" stroke-linecap="butt"/><line x1="620.50" y1="237.80" x2="631.50" y2="237.80" stroke="#333" stroke-width="1.40" stroke-linecap="butt"/><line x1="618.00" y1="242.50" x2="634.00" y2="242.50" stroke="#333" stroke-width="1.40" stroke-linecap="butt"/><line x1="620.50" y1="246.70" x2="631.50" y2="246.70" stroke="#333" stroke-width="1.40" stroke-linecap="butt"/><line x1="647.50" y1="233.00" x2="663.00" y2="233.00" stroke="#333" stroke-width="1.40" stroke-linecap="butt"/><line x1="652.00" y1="237.80" x2="663.00" y2="237.80" stroke="#333" stroke-width="1.40" stroke-linecap="butt"/><line x1="647.50" y1="242.50" x2="663.00" y2="242.50" stroke="#333" stroke-width="1.40" stroke-linecap="butt"/><line x1="652.00" y1="246.70" x2="663.00" y2="246.70" stroke="#333" stroke-width="1.40" stroke-linecap="butt"/><text x="0" y="0" font-size="10.5" font-family="Liberation Sans" fill="#333" transform="translate(695.5,209.5) rotate(-45)">ab</text><line x1="700.00" y1="212.00" x2="709.50" y2="202.50" stroke="#2f8bd8" stroke-width="1.30" stroke-linecap="butt"/><path d="M705,202.5 L709.8,202.2 L709.5,207" fill="none" stroke="#2f8bd8" stroke-width="1.30" stroke-linejoin="round" stroke-linecap="round" /><polyline points="718.80,203.30 721.90,207.00 725.00,203.30" fill="none" stroke="#333" stroke-width="1.50" stroke-linecap="round" stroke-linejoin="round"/><line x1="693.30" y1="233.00" x2="709.10" y2="233.00" stroke="#333" stroke-width="1.40" stroke-linecap="butt"/><line x1="701.50" y1="237.80" x2="709.10" y2="237.80" stroke="#333" stroke-width="1.40" stroke-linecap="butt"/><line x1="701.50" y1="242.50" x2="709.10" y2="242.50" stroke="#333" stroke-width="1.40" stroke-linecap="butt"/><line x1="693.30" y1="246.70" x2="709.10" y2="246.70" stroke="#333" stroke-width="1.40" stroke-linecap="butt"/><path d="M699.5,240.2 L694.5,240.2 M697,237.5 L694.3,240.2 L697,243" fill="none" stroke="#2f8bd8" stroke-width="1.40" stroke-linejoin="round" stroke-linecap="round" /><line x1="722.50" y1="233.00" x2="738.30" y2="233.00" stroke="#333" stroke-width="1.40" stroke-linecap="butt"/><line x1="730.50" y1="237.80" x2="738.30" y2="237.80" stroke="#333" stroke-width="1.40" stroke-linecap="butt"/><line x1="730.50" y1="242.50" x2="738.30" y2="242.50" stroke="#333" stroke-width="1.40" stroke-linecap="butt"/><line x1="722.50" y1="246.70" x2="738.30" y2="246.70" stroke="#333" stroke-width="1.40" stroke-linecap="butt"/><path d="M722.8,240.2 L728.5,240.2 M726,237.5 L728.7,240.2 L726,243" fill="none" stroke="#2f8bd8" stroke-width="1.40" stroke-linejoin="round" stroke-linecap="round" /><text x="770" y="204.5" font-size="10" font-family="Liberation Sans" fill="#444">ab</text><text x="770.2" y="213" font-size="10" font-family="Liberation Sans" fill="#444">c</text><path d="M785,205.5 C786.5,209.5 784,211.5 779.5,211.5 M782,208.8 L779.2,211.5 L782,214" fill="none" stroke="#2f8bd8" stroke-width="1.30" stroke-linejoin="round" stroke-linecap="round" /><polyline points="855.60,203.30 858.60,207.00 861.60,203.30" fill="none" stroke="#333" stroke-width="1.50" stroke-linecap="round" stroke-linejoin="round"/><rect x="768.30" y="232.30" width="15.80" height="15.50" rx="0.00" fill="#fff" stroke="#555" stroke-width="1.30" /><rect x="769.00" y="233.50" width="14.40" height="2.50" rx="0.00" fill="#d7e9f8" stroke="none" stroke-width="1.00" /><rect x="769.00" y="244.50" width="14.40" height="2.50" rx="0.00" fill="#d7e9f8" stroke="none" stroke-width="1.00" /><line x1="768.30" y1="236.50" x2="784.10" y2="236.50" stroke="#3a82c8" stroke-width="0.90" stroke-linecap="butt"/><line x1="768.30" y1="243.50" x2="784.10" y2="243.50" stroke="#3a82c8" stroke-width="0.90" stroke-linecap="butt"/><path d="M771,240 L781.5,240 M773,238 L771,240 L773,242 M779.5,238 L781.5,240 L779.5,242" fill="none" stroke="#2f8bd8" stroke-width="1.20" stroke-linejoin="round" stroke-linecap="round" /><polyline points="887.50,239.30 890.65,243.20 893.80,239.30" fill="none" stroke="#333" stroke-width="1.50" stroke-linecap="round" stroke-linejoin="round"/><rect x="921.90" y="192.20" width="172.00" height="25.00" rx="4.50" fill="#fff" stroke="#d4d4d4" stroke-width="1.00" stroke-dasharray="3 1.5"/><polyline points="1083.00,203.30 1086.35,207.00 1089.70,203.30" fill="none" stroke="#333" stroke-width="1.40" stroke-linecap="round" stroke-linejoin="round"/><rect x="925.30" y="235.50" width="17.50" height="11.00" rx="0.00" fill="none" stroke="#555" stroke-width="1.20" /><text x="927" y="244.5" font-size="8.5" font-family="Liberation Sans" fill="#555">CC</text><rect x="934.50" y="242.00" width="9.00" height="8.00" rx="2.00" fill="#f0a050" stroke="#e07c28" stroke-width="1.00" /><polyline points="951.30,239.30 954.55,243.20 957.80,239.30" fill="none" stroke="#333" stroke-width="1.50" stroke-linecap="round" stroke-linejoin="round"/><text x="967.5" y="248.5" font-size="20" font-family="Liberation Sans" fill="#333">%</text><path d="M1006.5,235.5 C1010,235 1011.5,237.5 1011,240.5 C1010.5,244.5 1007.5,247 1003,248.5 L1002.8,247.3 C1005.5,246 1007,244.2 1007.3,242.8 C1004.8,242.7 1003.3,241.3 1003.5,239 C1003.7,236.8 1005,235.7 1006.5,235.5 Z" fill="#222" stroke="none" stroke-width="0.00" stroke-linejoin="round" stroke-linecap="round" /><text x="1052" y="241" font-size="11" font-family="Liberation Sans" fill="#444">0</text><text x="1044.5" y="249.5" font-size="11" font-family="Liberation Sans" fill="#444">.00</text><path d="M1052,237 L1044,237 M1047,234 L1043.8,237 L1047,240" fill="none" stroke="#2f8bd8" stroke-width="1.40" stroke-linejoin="round" stroke-linecap="round" /><text x="1074" y="241" font-size="11" font-family="Liberation Sans" fill="#444">.00</text><text x="1081.5" y="249.5" font-size="11" font-family="Liberation Sans" fill="#444">.0</text><path d="M1072.5,246 L1081,246 M1078,243 L1081.2,246 L1078,249" fill="none" stroke="#2f8bd8" stroke-width="1.40" stroke-linejoin="round" stroke-linecap="round" /><rect x="1135.50" y="195.40" width="13.00" height="6.70" rx="0.00" fill="#f4828a" stroke="none" stroke-width="1.00" /><rect x="1135.50" y="209.00" width="14.50" height="8.50" rx="0.00" fill="#f4828a" stroke="none" stroke-width="1.00" /><rect x="1135.00" y="202.50" width="8.00" height="6.00" rx="0.00" fill="#7ab6ea" stroke="none" stroke-width="1.00" /><rect x="1129.80" y="195.40" width="30.50" height="23.20" rx="0.00" fill="none" stroke="#555" stroke-width="1.20" /><line x1="1135.50" y1="195.40" x2="1135.50" y2="218.60" stroke="#666" stroke-width="1.00" stroke-linecap="butt"/><line x1="1148.50" y1="195.40" x2="1148.50" y2="218.60" stroke="#666" stroke-width="1.00" stroke-linecap="butt"/><line x1="1154.50" y1="195.40" x2="1154.50" y2="218.60" stroke="#666" stroke-width="1.00" stroke-linecap="butt"/><line x1="1129.80" y1="202.00" x2="1160.30" y2="202.00" stroke="#666" stroke-width="1.00" stroke-linecap="butt"/><line x1="1129.80" y1="209.00" x2="1160.30" y2="209.00" stroke="#666" stroke-width="1.00" stroke-linecap="butt"/><polyline points="1168.80,205.30 1172.05,209.00 1175.30,205.30" fill="none" stroke="#333" stroke-width="1.50" stroke-linecap="round" stroke-linejoin="round"/><rect x="1194.70" y="195.50" width="30.00" height="23.00" rx="0.00" fill="#fff" stroke="#555" stroke-width="1.20" /><rect x="1204.50" y="202.00" width="20.20" height="16.50" rx="0.00" fill="#62a8e8" stroke="none" stroke-width="1.00" /><line x1="1204.50" y1="195.50" x2="1204.50" y2="218.50" stroke="#666" stroke-width="1.00" stroke-linecap="butt"/><line x1="1214.50" y1="195.50" x2="1214.50" y2="218.50" stroke="#666" stroke-width="1.00" stroke-linecap="butt"/><line x1="1194.70" y1="202.00" x2="1224.70" y2="202.00" stroke="#666" stroke-width="1.00" stroke-linecap="butt"/><line x1="1194.70" y1="210.00" x2="1224.70" y2="210.00" stroke="#666" stroke-width="1.00" stroke-linecap="butt"/><path d="M1206,220 C1203,222 1200,223.5 1197,224.5 C1202,226 1207,225 1209,222 Z" fill="#6fb0ea" stroke="#3a86c8" stroke-width="1.00" stroke-linejoin="round" stroke-linecap="round" /><path d="M1207,219.5 L1222.5,203 C1224,201.5 1226.5,202 1226.8,203.5 L1210,221.5 Z" fill="#fff" stroke="#444" stroke-width="1.20" stroke-linejoin="round" stroke-linecap="round" /><polyline points="1233.30,205.30 1236.55,209.00 1239.80,205.30" fill="none" stroke="#333" stroke-width="1.50" stroke-linecap="round" stroke-linejoin="round"/><rect x="1250.50" y="195.50" width="30.00" height="23.00" rx="0.00" fill="#fff" stroke="#555" stroke-width="1.20" /><rect x="1256.00" y="200.00" width="17.50" height="12.50" rx="0.00" fill="#62a8e8" stroke="none" stroke-width="1.00" /><line x1="1256.00" y1="195.50" x2="1256.00" y2="218.50" stroke="#666" stroke-width="1.00" stroke-linecap="butt"/><line x1="1274.00" y1="195.50" x2="1274.00" y2="218.50" stroke="#666" stroke-width="1.00" stroke-linecap="butt"/><line x1="1250.50" y1="212.50" x2="1280.50" y2="212.50" stroke="#666" stroke-width="1.00" stroke-linecap="butt"/><path d="M1262,220 C1259,222 1256,223.5 1253,224.5 C1258,226 1263,225 1265,222 Z" fill="#6fb0ea" stroke="#3a86c8" stroke-width="1.00" stroke-linejoin="round" stroke-linecap="round" /><path d="M1263,219.5 L1278.5,203 C1280,201.5 1282.5,202 1282.8,203.5 L1266,221.5 Z" fill="#fff" stroke="#444" stroke-width="1.20" stroke-linejoin="round" stroke-linecap="round" /><polyline points="1289.70,205.30 1292.95,209.00 1296.20,205.30" fill="none" stroke="#333" stroke-width="1.50" stroke-linecap="round" stroke-linejoin="round"/><rect x="1326.50" y="190.60" width="17.00" height="14.60" rx="0.00" fill="#fff" stroke="#444" stroke-width="1.30" /><line x1="1332.17" y1="190.60" x2="1332.17" y2="205.20" stroke="#666" stroke-width="1.00" stroke-linecap="butt"/><line x1="1337.83" y1="190.60" x2="1337.83" y2="205.20" stroke="#666" stroke-width="1.00" stroke-linecap="butt"/><line x1="1326.50" y1="195.47" x2="1343.50" y2="195.47" stroke="#666" stroke-width="1.00" stroke-linecap="butt"/><line x1="1326.50" y1="200.33" x2="1343.50" y2="200.33" stroke="#666" stroke-width="1.00" stroke-linecap="butt"/><rect x="1332.00" y="195.60" width="11.50" height="5.00" rx="0.00" fill="#62a8e8" stroke="none" stroke-width="1.00" /><path d="M1336,198.2 L1327,198.2 M1330,195.5 L1327,198.2 L1330,201" fill="none" stroke="#2f8bd8" stroke-width="1.50" stroke-linejoin="round" stroke-linecap="round" /><polyline points="1390.40,196.30 1393.60,200.20 1396.80,196.30" fill="none" stroke="#333" stroke-width="1.50" stroke-linecap="round" stroke-linejoin="round"/><rect x="1326.50" y="215.50" width="17.00" height="14.40" rx="0.00" fill="#fff" stroke="#444" stroke-width="1.30" /><line x1="1332.17" y1="215.50" x2="1332.17" y2="229.90" stroke="#666" stroke-width="1.00" stroke-linecap="butt"/><line x1="1337.83" y1="215.50" x2="1337.83" y2="229.90" stroke="#666" stroke-width="1.00" stroke-linecap="butt"/><line x1="1326.50" y1="220.30" x2="1343.50" y2="220.30" stroke="#666" stroke-width="1.00" stroke-linecap="butt"/><line x1="1326.50" y1="225.10" x2="1343.50" y2="225.10" stroke="#666" stroke-width="1.00" stroke-linecap="butt"/><rect x="1330.00" y="220.00" width="6.00" height="5.50" rx="0.00" fill="#62a8e8" stroke="none" stroke-width="1.00" /><line x1="1337.50" y1="219.50" x2="1343.00" y2="225.50" stroke="#e03030" stroke-width="1.20" stroke-linecap="butt"/><line x1="1343.00" y1="219.50" x2="1337.50" y2="225.50" stroke="#e03030" stroke-width="1.20" stroke-linecap="butt"/><polyline points="1395.20,221.30 1398.20,225.20 1401.20,221.30" fill="none" stroke="#333" stroke-width="1.50" stroke-linecap="round" stroke-linejoin="round"/><rect x="1326.50" y="240.50" width="17.00" height="15.00" rx="0.00" fill="#fff" stroke="#444" stroke-width="1.30" /><line x1="1332.17" y1="240.50" x2="1332.17" y2="255.50" stroke="#666" stroke-width="1.00" stroke-linecap="butt"/><line x1="1337.83" y1="240.50" x2="1337.83" y2="255.50" stroke="#666" stroke-width="1.00" stroke-linecap="butt"/><line x1="1326.50" y1="245.50" x2="1343.50" y2="245.50" stroke="#666" stroke-width="1.00" stroke-linecap="butt"/><line x1="1326.50" y1="250.50" x2="1343.50" y2="250.50" stroke="#666" stroke-width="1.00" stroke-linecap="butt"/><rect x="1329.50" y="243.50" width="11.00" height="7.00" rx="0.00" fill="#62a8e8" stroke="none" stroke-width="1.00" /><line x1="1329.00" y1="238.50" x2="1341.00" y2="238.50" stroke="#2f8bd8" stroke-width="1.20" stroke-linecap="butt"/><polyline points="1398.20,245.30 1401.50,249.20 1404.80,245.30" fill="none" stroke="#333" stroke-width="1.50" stroke-linecap="round" stroke-linejoin="round"/><path d="M1450.5,191 L1437.8,191 L1444.5,198.2 L1437.8,205.5 L1450.5,205.5" fill="none" stroke="#333" stroke-width="1.50" stroke-linejoin="round" stroke-linecap="round" /><polyline points="1460.20,196.30 1463.25,200.20 1466.30,196.30" fill="none" stroke="#333" stroke-width="1.50" stroke-linecap="round" stroke-linejoin="round"/><rect x="1435.60" y="215.50" width="17.00" height="14.50" rx="0.00" fill="#fff" stroke="#444" stroke-width="1.30" /><line x1="1435.60" y1="217.50" x2="1452.60" y2="217.50" stroke="#666" stroke-width="0.80" stroke-linecap="butt"/><path d="M1444,219.5 L1444,227.5 M1441,224.5 L1444,227.5 L1447,224.5" fill="none" stroke="#2f8bd8" stroke-width="1.30" stroke-linejoin="round" stroke-linecap="round" /><polyline points="1460.20,221.30 1463.25,225.20 1466.30,221.30" fill="none" stroke="#333" stroke-width="1.50" stroke-linecap="round" stroke-linejoin="round"/><path d="M1436.5,248.5 L1445,240 L1451.5,246.5 L1443,255 Z" fill="#f2e6f5" stroke="#9b4fb0" stroke-width="1.30" stroke-linejoin="round" stroke-linecap="round" /><path d="M1436.5,248.5 L1440.5,244.5 L1447,251 L1443,255 Z" fill="#c77fd8" stroke="#9b4fb0" stroke-width="1.20" stroke-linejoin="round" stroke-linecap="round" /><polyline points="1460.20,246.30 1463.25,250.20 1466.30,246.30" fill="none" stroke="#333" stroke-width="1.50" stroke-linecap="round" stroke-linejoin="round"/><text x="1476" y="206" font-size="15.5" font-family="Liberation Sans" fill="#2f8bd8">A</text><text x="1476.4" y="222" font-size="15" font-family="Liberation Sans" fill="#444">Z</text><path d="M1490.5,199 L1507.5,199 L1501,207.5 L1501,216.5 L1497,216.5 L1497,207.5 Z" fill="#fff" stroke="#444" stroke-width="1.20" stroke-linejoin="round" stroke-linecap="round" /><polyline points="1515.90,205.80 1519.25,209.80 1522.60,205.80" fill="none" stroke="#333" stroke-width="1.50" stroke-linecap="round" stroke-linejoin="round"/><circle cx="1552.30" cy="202.80" r="11.20" fill="none" stroke="#333" stroke-width="1.30"/><line x1="1544.30" y1="210.80" x2="1531.50" y2="223.50" stroke="#333" stroke-width="1.30" stroke-linecap="butt"/><polyline points="1572.70,205.80 1575.50,209.80 1578.30,205.80" fill="none" stroke="#333" stroke-width="1.50" stroke-linecap="round" stroke-linejoin="round"/><rect x="1613.50" y="191.30" width="31.00" height="31.00" rx="0.00" fill="none" stroke="#e5704a" stroke-width="1.30" /><rect x="1616.50" y="194.50" width="11.50" height="11.00" rx="0.00" fill="none" stroke="#e5704a" stroke-width="1.10" /><rect x="1630.50" y="194.50" width="11.50" height="11.00" rx="0.00" fill="none" stroke="#e5704a" stroke-width="1.10" /><rect x="1616.50" y="208.00" width="11.50" height="11.00" rx="0.00" fill="none" stroke="#e5704a" stroke-width="1.10" /><rect x="1630.50" y="208.00" width="11.50" height="11.00" rx="0.00" fill="none" stroke="#e5704a" stroke-width="1.10" /><rect x="1685.50" y="189.50" width="34.50" height="35.00" rx="0.00" fill="#fff" stroke="#333" stroke-width="1.30" /><rect x="1686.00" y="190.00" width="33.50" height="4.00" rx="0.00" fill="#bdbdbd" stroke="none" stroke-width="1.00" /><line x1="1685.50" y1="205.00" x2="1719.50" y2="205.00" stroke="#777" stroke-width="1.00" stroke-linecap="butt"/><line x1="1685.50" y1="213.50" x2="1719.50" y2="213.50" stroke="#777" stroke-width="1.00" stroke-linecap="butt"/><line x1="1697.00" y1="214.00" x2="1697.00" y2="224.50" stroke="#777" stroke-width="1.00" stroke-linecap="butt"/><line x1="1708.50" y1="214.00" x2="1708.50" y2="224.50" stroke="#777" stroke-width="1.00" stroke-linecap="butt"/><circle cx="1701.00" cy="203.50" r="10.50" fill="#fff" stroke="#333" stroke-width="1.30"/><line x1="1708.50" y1="211.00" x2="1719.50" y2="224.50" stroke="#333" stroke-width="1.40" stroke-linecap="butt"/><rect x="1695.50" y="202.00" width="3.00" height="6.00" rx="0.00" fill="#aaa" stroke="none" stroke-width="1.00" /><rect x="1699.50" y="198.00" width="3.00" height="10.00" rx="0.00" fill="#aaa" stroke="none" stroke-width="1.00" /><rect x="1703.00" y="200.00" width="3.50" height="8.00" rx="0.00" fill="#3a8be0" stroke="none" stroke-width="1.00" /><polygon points="238.5,276.5 244,276.5 241.25,271.5" fill="#555"/><polygon points="238.5,281.5 244,281.5 241.25,286.5" fill="#555"/><line x1="265.50" y1="276.50" x2="274.00" y2="285.50" stroke="#bdbdbd" stroke-width="1.60" stroke-linecap="butt"/><line x1="274.00" y1="276.50" x2="265.50" y2="285.50" stroke="#bdbdbd" stroke-width="1.60" stroke-linecap="butt"/><path d="M296.5,281.5 L300.5,285.5 L310,276" fill="none" stroke="#c2c2c2" stroke-width="1.60" stroke-linejoin="round" stroke-linecap="round" /><text x="329.5" y="287" font-size="15" font-family="Liberation Serif" font-style="italic" fill="#333">fx</text><polygon points="194.5,962 202.5,967.5 194.5,973" fill="#a9a9a9"/><rect x="218.80" y="957.00" width="1" height="20.00" fill="#d4d4d4"/><line x1="468.30" y1="961.50" x2="468.30" y2="974.00" stroke="#555" stroke-width="1.60" stroke-linecap="butt"/><line x1="462.30" y1="967.70" x2="474.30" y2="967.70" stroke="#555" stroke-width="1.60" stroke-linecap="butt"/><rect x="487.20" y="957.00" width="1" height="20.00" fill="#d4d4d4"/><circle cx="248.50" cy="989.50" r="2.00" fill="none" stroke="#666" stroke-width="1.10"/><path d="M241,992.5 C244,994 246,993.5 248.5,993.5 C251,993.5 253,994 256,992.5 M248.5,993.5 L248.5,997 L244.5,1002 M248.5,997 L251,999" fill="none" stroke="#666" stroke-width="1.10" stroke-linejoin="round" stroke-linecap="round" /><line x1="251.50" y1="997.50" x2="256.50" y2="1003.00" stroke="#666" stroke-width="1.10" stroke-linecap="butt"/><line x1="256.50" y1="997.50" x2="251.50" y2="1003.00" stroke="#666" stroke-width="1.10" stroke-linecap="butt"/><rect x="1409.00" y="982.30" width="41.70" height="22.00" rx="0.00" fill="#acacac" stroke="none" stroke-width="1.00" /><rect x="1422.80" y="986.80" width="14.60" height="15.20" rx="0.00" fill="#fff" stroke="none" stroke-width="1.00" /><rect x="1424.00" y="988.00" width="3.60" height="3.60" rx="0.00" fill="#8c8c8c" stroke="none" stroke-width="1.00" /><rect x="1428.80" y="988.00" width="3.60" height="3.60" rx="0.00" fill="#8c8c8c" stroke="none" stroke-width="1.00" /><rect x="1433.60" y="988.00" width="3.60" height="3.60" rx="0.00" fill="#8c8c8c" stroke="none" stroke-width="1.00" /><rect x="1424.00" y="992.90" width="3.60" height="3.60" rx="0.00" fill="#8c8c8c" stroke="none" stroke-width="1.00" /><rect x="1428.80" y="992.90" width="3.60" height="3.60" rx="0.00" fill="#8c8c8c" stroke="none" stroke-width="1.00" /><rect x="1433.60" y="992.90" width="3.60" height="3.60" rx="0.00" fill="#8c8c8c" stroke="none" stroke-width="1.00" /><rect x="1424.00" y="997.80" width="3.60" height="3.60" rx="0.00" fill="#8c8c8c" stroke="none" stroke-width="1.00" /><rect x="1428.80" y="997.80" width="3.60" height="3.60" rx="0.00" fill="#8c8c8c" stroke="none" stroke-width="1.00" /><rect x="1433.60" y="997.80" width="3.60" height="3.60" rx="0.00" fill="#8c8c8c" stroke="none" stroke-width="1.00" /><rect x="1463.30" y="987.30" width="14.50" height="14.00" rx="0.00" fill="none" stroke="#777" stroke-width="1.20" /><rect x="1466.50" y="990.00" width="8.00" height="8.50" rx="0.00" fill="none" stroke="#777" stroke-width="1.00" /><line x1="1468.50" y1="992.50" x2="1473.00" y2="992.50" stroke="#777" stroke-width="0.80" stroke-linecap="butt"/><line x1="1468.50" y1="995.00" x2="1473.00" y2="995.00" stroke="#777" stroke-width="0.80" stroke-linecap="butt"/><rect x="1502.50" y="987.30" width="15.00" height="14.00" rx="0.00" fill="none" stroke="#777" stroke-width="1.20" /><path d="M1506,987.3 L1506,993.5 M1510.5,987.3 L1510.5,993.5 M1502.5,996 L1506,996" fill="none" stroke="#777" stroke-width="1.20" stroke-linejoin="round" stroke-linecap="round" /><line x1="1539.80" y1="994.30" x2="1548.30" y2="994.30" stroke="#666" stroke-width="1.80" stroke-linecap="butt"/><rect x="1557.00" y="992.80" width="111.00" height="3.60" rx="1.80" fill="#9e9e9e" stroke="none" stroke-width="0.00" /><circle cx="1613.30" cy="994.50" r="8.30" fill="#fafafa" stroke="#cfcfcf" stroke-width="0.80"/><line x1="1676.30" y1="994.30" x2="1685.00" y2="994.30" stroke="#555" stroke-width="1.80" stroke-linecap="butt"/><line x1="1680.65" y1="990.00" x2="1680.65" y2="998.70" stroke="#555" stroke-width="1.80" stroke-linecap="butt"/></svg>
<div class="abs t m_autosave" style="transform:scaleX(1.0363);transform-origin:0 0;left:254.7px;top:123.37px;font-size:12.2px;line-height:12.2px;color:#4a4a4a;font-weight:normal;-webkit-text-stroke:0.35px #4a4a4a">AutoSave</div><div class="abs t m_title" style="transform:scaleX(1.0507);transform-origin:0 0;left:836.3px;top:123.16px;font-size:13.4px;line-height:13.4px;color:#2f2f2f;font-weight:normal;">PEAK_Import_Create_Contact_Template</div><div class="abs t m_search" style="transform:scaleX(1.0144);transform-origin:0 0;left:1436.5px;top:122.82px;font-size:13.8px;line-height:13.8px;color:#888;font-weight:bold;">Search (Cmd + Ctrl + U)</div><div class="abs t m_tab_Insert" style="transform:scaleX(1.1291);transform-origin:0 0;left:233px;top:156.78px;font-size:14.2px;line-height:14.2px;color:#262626;font-weight:normal;-webkit-text-stroke:0.55px #262626">Insert</div><div class="abs t m_tab_Draw" style="transform:scaleX(1.0651);transform-origin:0 0;left:301px;top:156.78px;font-size:14.2px;line-height:14.2px;color:#262626;font-weight:normal;-webkit-text-stroke:0.55px #262626">Draw</div><div class="abs t m_tab_PageLayout" style="transform:scaleX(1.0733);transform-origin:0 0;left:364.5px;top:156.78px;font-size:14.2px;line-height:14.2px;color:#262626;font-weight:normal;-webkit-text-stroke:0.55px #262626">Page Layout</div><div class="abs t m_tab_Formulas" style="transform:scaleX(1.0856);transform-origin:0 0;left:479px;top:156.78px;font-size:14.2px;line-height:14.2px;color:#262626;font-weight:normal;-webkit-text-stroke:0.55px #262626">Formulas</div><div class="abs t m_tab_Data" style="transform:scaleX(1.0730);transform-origin:0 0;left:571.8px;top:156.78px;font-size:14.2px;line-height:14.2px;color:#262626;font-weight:normal;-webkit-text-stroke:0.55px #262626">Data</div><div class="abs t m_tab_Review" style="transform:scaleX(1.0438);transform-origin:0 0;left:630.7px;top:156.78px;font-size:14.2px;line-height:14.2px;color:#262626;font-weight:normal;-webkit-text-stroke:0.55px #262626">Review</div><div class="abs t m_tab_View" style="transform:scaleX(1.0304);transform-origin:0 0;left:707.3px;top:156.78px;font-size:14.2px;line-height:14.2px;color:#262626;font-weight:normal;-webkit-text-stroke:0.55px #262626">View</div><div class="abs t m_tab_Automate" style="transform:scaleX(1.0849);transform-origin:0 0;left:768.2px;top:156.78px;font-size:14.2px;line-height:14.2px;color:#262626;font-weight:normal;-webkit-text-stroke:0.55px #262626">Automate</div><div class="abs t m_home" style="left:163px;top:156.78px;font-size:14.2px;line-height:14.2px;color:#262626;font-weight:normal;-webkit-text-stroke:0.55px #262626">Home</div><div class="abs t m_comments" style="transform:scaleX(1.0291);transform-origin:0 0;left:1566.3px;top:158.64px;font-size:14.6px;line-height:14.6px;color:#222;font-weight:normal;-webkit-text-stroke:0.25px #222">Comments</div><div class="abs t m_share" style="transform:scaleX(0.9420);transform-origin:0 0;left:1692.4px;top:158.64px;font-size:14.6px;line-height:14.6px;color:#fff;font-weight:bold;">Share</div><div class="abs t m_paste" style="left:174.5px;top:230.48px;font-size:11.6px;line-height:11.6px;color:#222;font-weight:normal;-webkit-text-stroke:0.2px #222">Paste</div><div class="abs t m_calibri" style="transform:scaleX(1.0672);transform-origin:0 0;left:287.7px;top:197.94px;font-size:13.3px;line-height:13.3px;color:#1c1c1c;font-weight:normal;">Calibri (Body)</div><div class="abs t m_11" style="transform:scaleX(0.8865);transform-origin:0 0;left:448px;top:198.14px;font-size:13.3px;line-height:13.3px;color:#1c1c1c;font-weight:normal;">11</div><div class="abs t m_Agrow" style="left:509.2px;top:193.44px;font-size:19.8px;line-height:19.8px;color:#3a3a3a;font-weight:normal;">A</div><div class="abs t m_Ashrink" style="left:539.7px;top:197.5px;font-size:15px;line-height:15px;color:#3a3a3a;font-weight:normal;">A</div><div class="abs t m_B" style="left:290.6px;top:232.13px;font-size:15.2px;line-height:15.2px;color:#2a2a2a;font-weight:bold;">B</div><div class="abs t m_U" style="left:347.5px;top:231.45px;font-size:14px;line-height:14px;color:#333;font-weight:normal;">U</div><div class="abs t m_Acolor" style="left:508.6px;top:230.26px;font-size:16px;line-height:16px;color:#333;font-weight:normal;">A</div><div class="abs t m_wrap" style="left:793px;top:198.87px;font-size:12.2px;line-height:12.2px;color:#1e1e1e;font-weight:normal;-webkit-text-stroke:0.2px #1e1e1e">Wrap Text</div><div class="abs t m_merge" style="transform:scaleX(1.0310);transform-origin:0 0;left:793px;top:234.67px;font-size:12.2px;line-height:12.2px;color:#1e1e1e;font-weight:normal;-webkit-text-stroke:0.2px #1e1e1e">Merge &amp; Center</div><div class="abs t m_general" style="transform:scaleX(1.0158);transform-origin:0 0;left:928px;top:197.94px;font-size:13.3px;line-height:13.3px;color:#1c1c1c;font-weight:normal;">General</div><div class="abs t m_cond" style="transform:scaleX(1.1140);transform-origin:0 0;left:1120.9px;top:230.65px;font-size:11.4px;line-height:11.4px;color:#1e1e1e;font-weight:normal;-webkit-text-stroke:0.2px #1e1e1e">Conditional</div><div class="abs t m_fmtg" style="transform:scaleX(1.1219);transform-origin:0 0;left:1121.5px;top:243.25px;font-size:11.4px;line-height:11.4px;color:#1e1e1e;font-weight:normal;-webkit-text-stroke:0.2px #1e1e1e">Formatting</div><div class="abs t m_fmt" style="transform:scaleX(1.0512);transform-origin:0 0;left:1196.4px;top:230.65px;font-size:11.4px;line-height:11.4px;color:#1e1e1e;font-weight:normal;-webkit-text-stroke:0.2px #1e1e1e">Format</div><div class="abs t m_astable" style="transform:scaleX(1.0810);transform-origin:0 0;left:1193px;top:243.25px;font-size:11.4px;line-height:11.4px;color:#1e1e1e;font-weight:normal;-webkit-text-stroke:0.2px #1e1e1e">as Table</div><div class="abs t m_cell" style="transform:scaleX(1.0843);transform-origin:0 0;left:1261.5px;top:230.65px;font-size:11.4px;line-height:11.4px;color:#1e1e1e;font-weight:normal;-webkit-text-stroke:0.2px #1e1e1e">Cell</div><div class="abs t m_styles" style="transform:scaleX(1.0823);transform-origin:0 0;left:1254.9px;top:243.25px;font-size:11.4px;line-height:11.4px;color:#1e1e1e;font-weight:normal;-webkit-text-stroke:0.2px #1e1e1e">Styles</div><div class="abs t m_ins" style="transform:scaleX(1.0607);transform-origin:0 0;left:1351.6px;top:192.01px;font-size:11.8px;line-height:11.8px;color:#1e1e1e;font-weight:normal;-webkit-text-stroke:0.2px #1e1e1e">Insert</div><div class="abs t m_del" style="transform:scaleX(1.0249);transform-origin:0 0;left:1351.6px;top:217.01px;font-size:11.8px;line-height:11.8px;color:#1e1e1e;font-weight:normal;-webkit-text-stroke:0.2px #1e1e1e">Delete</div><div class="abs t m_fmt2" style="left:1351.6px;top:241.51px;font-size:11.8px;line-height:11.8px;color:#1e1e1e;font-weight:normal;-webkit-text-stroke:0.2px #1e1e1e">Format</div><div class="abs t m_sort" style="transform:scaleX(1.0528);transform-origin:0 0;left:1481.5px;top:230.88px;font-size:11.6px;line-height:11.6px;color:#1e1e1e;font-weight:normal;-webkit-text-stroke:0.2px #1e1e1e">Sort &amp;</div><div class="abs t m_filter" style="transform:scaleX(1.0694);transform-origin:0 0;left:1484.8px;top:243.58px;font-size:11.6px;line-height:11.6px;color:#1e1e1e;font-weight:normal;-webkit-text-stroke:0.2px #1e1e1e">Filter</div><div class="abs t m_find" style="transform:scaleX(1.0392);transform-origin:0 0;left:1536.4px;top:230.88px;font-size:11.6px;line-height:11.6px;color:#1e1e1e;font-weight:normal;-webkit-text-stroke:0.2px #1e1e1e">Find &amp;</div><div class="abs t m_select" style="transform:scaleX(1.0484);transform-origin:0 0;left:1536.4px;top:243.58px;font-size:11.6px;line-height:11.6px;color:#1e1e1e;font-weight:normal;-webkit-text-stroke:0.2px #1e1e1e">Select</div><div class="abs t m_addins" style="transform:scaleX(1.0756);transform-origin:0 0;left:1608.75px;top:230.43px;font-size:11.6px;line-height:11.6px;color:#1e1e1e;font-weight:normal;-webkit-text-stroke:0.2px #1e1e1e">Add-ins</div><div class="abs t m_analyze" style="transform:scaleX(1.0527);transform-origin:0 0;left:1680.8px;top:230.48px;font-size:11.6px;line-height:11.6px;color:#1e1e1e;font-weight:normal;-webkit-text-stroke:0.2px #1e1e1e">Analyze</div><div class="abs t m_data" style="left:1690px;top:243.38px;font-size:11.6px;line-height:11.6px;color:#1e1e1e;font-weight:normal;-webkit-text-stroke:0.2px #1e1e1e">Data</div><div class="abs t m_7" style="left:175.5px;top:275.5px;font-size:13px;line-height:13px;color:#333;font-weight:normal;">7</div><div class="abs t m_tab1" style="transform:scaleX(1.0165);transform-origin:0 0;left:240.2px;top:961.5px;font-size:13px;line-height:13px;color:#5c5c5c;font-weight:normal;-webkit-text-stroke:0.3px #5c5c5c">สร้างผู้ติดต่อใหม่</div><div class="abs t m_tab2" style="transform:scaleX(1.0208);transform-origin:0 0;left:372.7px;top:961.5px;font-size:13px;line-height:13px;color:#1f7d4a;font-weight:normal;-webkit-text-stroke:0.3px #1f7d4a">คำอธิบาย</div><div class="abs t m_ready" style="left:176px;top:988.39px;font-size:12.3px;line-height:12.3px;color:#555;font-weight:normal;">Ready</div><div class="abs t m_acc" style="transform:scaleX(1.1594);transform-origin:0 0;left:261.3px;top:988.39px;font-size:12.3px;line-height:12.3px;color:#555;font-weight:normal;">Accessibility: Investigate</div><div class="abs t m_zoom" style="left:1706.2px;top:988.79px;font-size:12.3px;line-height:12.3px;color:#444;font-weight:normal;">110%</div>
</div></div>
</body></html>
